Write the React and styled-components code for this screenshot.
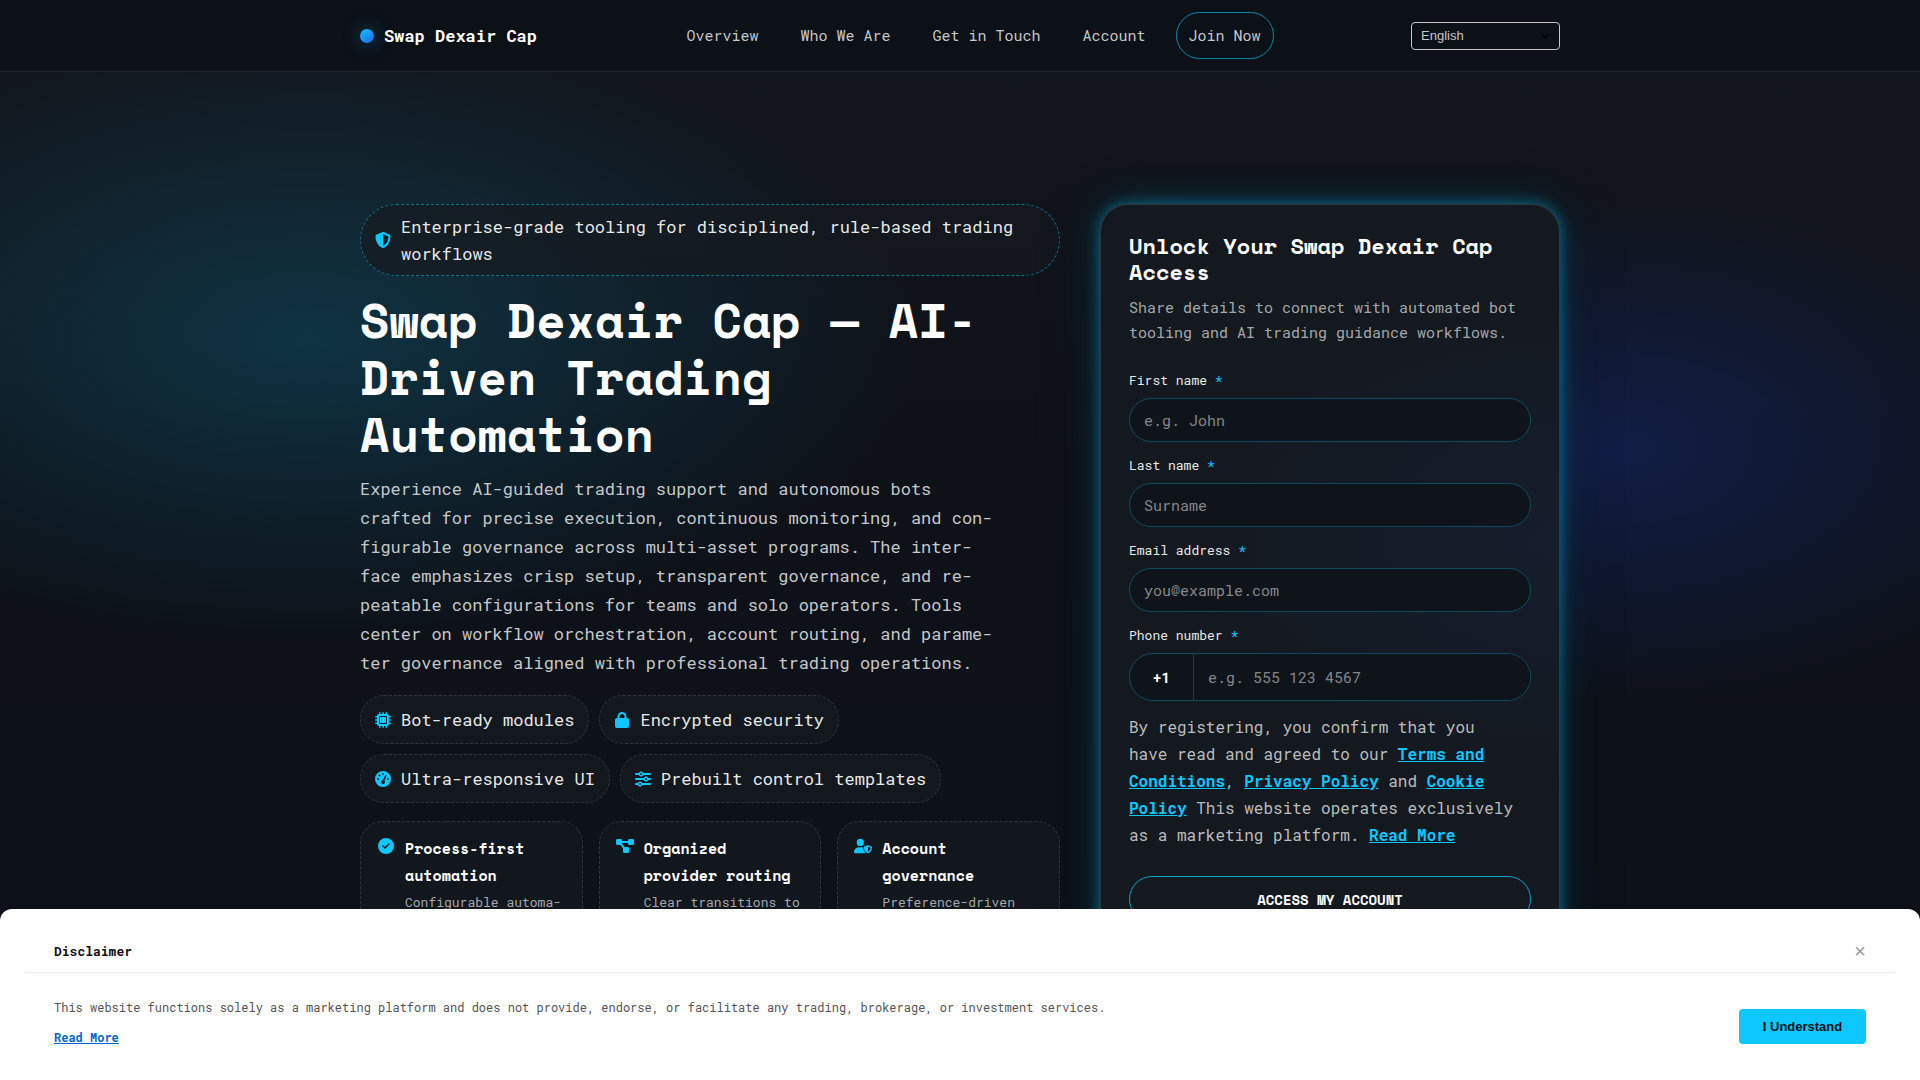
import React from "react";
import styled, { createGlobalStyle } from "styled-components";
import {
  FaShieldHalved,
  FaMicrochip,
  FaLock,
  FaGaugeHigh,
  FaSliders,
  FaCircleCheck,
  FaDiagramProject,
  FaUserShield,
} from "react-icons/fa6";
import { ChevronDown } from "lucide-react";

const navItems = ["Overview", "Who We Are", "Get in Touch", "Account"];

const chips = [
  { icon: FaMicrochip, text: "Bot-ready modules" },
  { icon: FaLock, text: "Encrypted security" },
  { icon: FaGaugeHigh, text: "Ultra-responsive UI" },
  { icon: FaSliders, text: "Prebuilt control templates" },
];

const features = [
  {
    icon: FaCircleCheck,
    title: "Process-first automation",
    text: "Configurable automa-",
  },
  {
    icon: FaDiagramProject,
    title: "Organized provider routing",
    text: "Clear transitions to",
  },
  {
    icon: FaUserShield,
    title: "Account governance",
    text: "Preference-driven",
  },
];

const fields = [
  { id: "first", label: "First name", type: "text", hint: "e.g. John" },
  { id: "last", label: "Last name", type: "text", hint: "Surname" },
  { id: "email", label: "Email address", type: "email", hint: "you@example.com" },
];

function App() {
  return (
    <React.Fragment>
      <GlobalStyle />
      <Header>
        <HeaderInner>
          <Brand href="#">
            <Dot />
            Swap Dexair Cap
          </Brand>
          <Nav>
            {navItems.map((item) => (
              <NavLink key={item} href="#">
                {item}
              </NavLink>
            ))}
            <NavLink href="#" $outlined>
              Join Now
            </NavLink>
          </Nav>
          <LangBox>
            <Lang aria-label="Language">
              <option>English</option>
            </Lang>
            <ChevronDown size={14} color="#000" />
          </LangBox>
        </HeaderInner>
      </Header>

      <Hero>
        <Intro>
          <Badge>
            <FaShieldHalved />
            <span>
              Enterprise-grade tooling for disciplined, rule-based trading
              workflows
            </span>
          </Badge>
          <Title>Swap Dexair Cap — AI-Driven Trading Automation</Title>
          <Lead>
            Experience AI-guided trading support and autonomous bots crafted for
            precise execution, continuous monitoring, and con&shy;figurable
            governance across multi-asset programs. The inter&shy;face
            emphasizes crisp setup, transparent governance, and re&shy;peatable
            configurations for teams and solo operators. Tools center on
            workflow orchestration, account routing, and parame&shy;ter
            governance aligned with professional trading operations.
          </Lead>
          <Chips>
            {chips.map(({ icon: Icon, text }) => (
              <Chip key={text}>
                <Icon />
                {text}
              </Chip>
            ))}
          </Chips>
          <Features>
            {features.map(({ icon: Icon, title, text }) => (
              <Feature key={title}>
                <Icon />
                <div>
                  <FeatureTitle>{title}</FeatureTitle>
                  <FeatureText>{text}</FeatureText>
                </div>
              </Feature>
            ))}
          </Features>
        </Intro>

        <Card>
          <CardTitle>Unlock Your Swap Dexair Cap Access</CardTitle>
          <CardText>
            Share details to connect with automated bot tooling and AI trading
            guidance workflows.
          </CardText>
          <Form onSubmit={(e) => e.preventDefault()}>
            {fields.map((f) => (
              <Field key={f.id}>
                <Label htmlFor={f.id}>
                  {f.label} <Star>*</Star>
                </Label>
                <Input id={f.id} type={f.type} placeholder={f.hint} />
              </Field>
            ))}
            <Field>
              <Label htmlFor="phone">
                Phone number <Star>*</Star>
              </Label>
              <PhoneRow>
                <Prefix>+1</Prefix>
                <PhoneInput id="phone" type="tel" placeholder="e.g. 555 123 4567" />
              </PhoneRow>
            </Field>
            <Legal>
              By registering, you confirm that you
              <br />
              have read and agreed to our <a href="#">Terms and</a>
              <br />
              <a href="#">Conditions</a>, <a href="#">Privacy Policy</a> and{" "}
              <a href="#">Cookie</a>
              <br />
              <a href="#">Policy</a> This website operates exclusively
              <br />
              as a marketing platform. <a href="#">Read More</a>
            </Legal>
            <Submit type="submit">ACCESS MY ACCOUNT</Submit>
          </Form>
        </Card>
      </Hero>

      <Sheet>
        <SheetHead>
          <SheetTitle>Disclaimer</SheetTitle>
          <Close type="button" aria-label="Close">
            ×
          </Close>
        </SheetHead>
        <SheetBody>
          <SheetText>
            <p>
              This website functions solely as a marketing platform and does not
              provide, endorse, or facilitate any trading, brokerage, or
              investment services.
            </p>
            <a href="#">Read More</a>
          </SheetText>
          <Accept type="button">I Understand</Accept>
        </SheetBody>
      </Sheet>
    </React.Fragment>
  );
}

export default App;

const mono = `"Roboto Mono", "Liberation Mono", monospace`;
const display = `"Space Mono", "DejaVu Sans Mono", monospace`;
const cyan = "#0cc8ff";

const GlobalStyle = createGlobalStyle`
  * {
    box-sizing: border-box;
  }
  body {
    margin: 0;
    min-height: 100vh;
    font-family: ${mono};
    font-size: 17px;
    line-height: 27px;
    color: #e8e8e8;
    background:
      radial-gradient(720px 360px at 16% 340px, rgba(12, 200, 255, 0.18), transparent 85%),
      radial-gradient(560px 300px at 84% 450px, rgba(30, 80, 255, 0.2), transparent 85%),
      linear-gradient(180deg, #13171e 0px, #0e1118 450px, #0c1119 1080px);
  }
  h1, h2, h3, p {
    margin: 0;
  }
`;

const Header = styled.header`
  background-color: #0c1017;
  border-bottom: 1px solid #20242b;
`;

const HeaderInner = styled.div`
  max-width: 1200px;
  min-height: 71px;
  margin: 0 auto;
  display: flex;
  justify-content: space-between;
  align-items: center;
`;

const Brand = styled.a`
  display: flex;
  align-items: center;
  gap: 10px;
  color: #fff;
  font-weight: 700;
  text-decoration: none;
`;

const Dot = styled.span`
  width: 14px;
  height: 14px;
  border-radius: 50%;
  background: linear-gradient(135deg, #0cc8ff, #2563eb);
  box-shadow: 0 0 18px rgba(12, 200, 255, 0.4);
`;

const Nav = styled.nav`
  display: flex;
  align-items: center;
  gap: 18px;
`;

const NavLink = styled.a`
  padding: 10px 12px;
  color: #c6c7c9;
  font-size: 15px;
  line-height: 25px;
  text-decoration: none;
  border-radius: 24px;
  border: ${(props) => (props.$outlined ? "1px solid #0b86ab" : "none")};
`;

const LangBox = styled.div`
  display: grid;
  align-items: center;
  justify-items: end;

  > * {
    grid-area: 1 / 1;
  }
  svg {
    margin-right: 8px;
    pointer-events: none;
  }
`;

const Lang = styled.select`
  appearance: none;
  width: 149px;
  height: 28px;
  padding: 0 9px;
  border: 1px solid #c6c7c9;
  border-radius: 4px;
  background: transparent;
  color: #c6c7c9;
  font-family: "Liberation Sans", sans-serif;
  font-size: 13px;
`;

const Hero = styled.main`
  max-width: 1200px;
  margin: 0 auto;
  padding: 132px 0 80px;
  display: grid;
  grid-template-columns: minmax(0, 1fr) 460px;
  align-items: start;
  gap: 40px;
`;

const Intro = styled.section`
  display: flex;
  flex-direction: column;
`;

const Badge = styled.div`
  display: flex;
  align-items: center;
  gap: 10px;
  padding: 8px 14px;
  border: 1px dashed #0b7595;
  border-radius: 36px;
  background-color: rgba(22, 25, 32, 0.7);

  svg {
    flex: none;
    width: 16px;
    height: 16px;
    color: ${cyan};
  }
`;

const Title = styled.h1`
  margin-top: 15px;
  font-family: ${display};
  font-size: 48px;
  line-height: 57px;
  color: #fff;
`;

const Lead = styled.p`
  max-width: 636px;
  margin-top: 12px;
  line-height: 29px;
  color: #c6c7c9;
`;

const Chips = styled.div`
  display: flex;
  flex-wrap: wrap;
  gap: 10px;
  margin-top: 18px;
`;

const Chip = styled.span`
  display: flex;
  align-items: center;
  gap: 10px;
  padding: 10px 14px;
  border: 1px dashed #31363d;
  border-radius: 24px;
  background-color: #13181f;

  svg {
    width: 16px;
    height: 16px;
    color: ${cyan};
  }
`;

const Features = styled.div`
  display: grid;
  grid-template-columns: repeat(3, 1fr);
  gap: 16px;
  margin-top: 18px;
`;

const Feature = styled.article`
  display: flex;
  gap: 10px;
  min-height: 160px;
  padding: 13px 16px;
  border: 1px dashed #31363d;
  border-radius: 22px;
  background-color: #12171e;

  svg {
    flex: none;
    width: 18px;
    height: 16px;
    margin-top: 3px;
    color: ${cyan};
  }
`;

const FeatureTitle = styled.h3`
  font-family: ${display};
  font-size: 15px;
  line-height: 27px;
  color: #fff;
`;

const FeatureText = styled.p`
  font-size: 13px;
  color: #a5a7aa;
`;

const Card = styled.section`
  padding: 28px;
  border: 1px solid #33363c;
  border-radius: 28px;
  background:
    radial-gradient(400px 260px at 100% 45%, rgba(40, 60, 160, 0.1), transparent),
    #14191f;
  box-shadow:
    0 0 14px rgba(12, 200, 255, 0.45),
    0 0 40px rgba(12, 200, 255, 0.2),
    0 10px 60px rgba(0, 0, 0, 0.4);
`;

const CardTitle = styled.h2`
  font-family: ${display};
  font-size: 22px;
  line-height: 26px;
  color: #fff;
`;

const CardText = styled.p`
  margin-top: 10px;
  font-size: 15px;
  line-height: 25px;
  color: #a5a7aa;
`;

const Form = styled.form`
  display: flex;
  flex-direction: column;
  gap: 12px;
  margin-top: 24px;
`;

const Field = styled.div`
  display: flex;
  flex-direction: column;
  gap: 7px;
`;

const Label = styled.label`
  font-size: 13px;
  line-height: 22px;
`;

const Star = styled.span`
  color: ${cyan};
`;

const Input = styled.input`
  width: 100%;
  height: 44px;
  padding: 0 14px;
  border: 1px solid #0d4d62;
  border-radius: 22px;
  background-color: #0f131a;
  color: #e8e8e8;
  font-family: ${mono};
  font-size: 15px;
  outline: none;

  &::placeholder {
    color: #85878b;
  }
`;

const PhoneRow = styled.div`
  display: flex;
  height: 48px;
  overflow: hidden;
  border: 1px solid #0d4d62;
  border-radius: 24px;
  background-color: #0f131a;
`;

const Prefix = styled.span`
  display: flex;
  justify-content: center;
  align-items: center;
  width: 64px;
  border-right: 1px solid #31363d;
  color: #fff;
  font-size: 14px;
  font-weight: 700;
`;

const PhoneInput = styled(Input)`
  flex: 1;
  height: auto;
  border: none;
  border-radius: 0;
`;

const Legal = styled.p`
  font-size: 16px;
  color: #bbbcbe;

  a {
    color: ${cyan};
    font-weight: 700;
  }
`;

const Submit = styled.button`
  height: 46px;
  margin-top: 16px;
  border: 1px solid #0ba3d0;
  border-radius: 23px;
  background: transparent;
  color: #fff;
  font-family: ${display};
  font-size: 14px;
  font-weight: 700;
`;

const Sheet = styled.aside`
  position: fixed;
  left: 0;
  right: 0;
  bottom: 0;
  padding: 25px;
  border-radius: 12px 12px 0 0;
  background-color: #fff;
`;

const SheetHead = styled.div`
  display: flex;
  justify-content: space-between;
  align-items: center;
  height: 39px;
  padding: 0 29px 4px;
  border-bottom: 1px solid #e9e9e9;
`;

const SheetTitle = styled.h2`
  font-size: 13px;
  line-height: 22px;
  color: #111;
`;

const Close = styled.button`
  padding: 0;
  border: none;
  background: none;
  color: #999;
  font-family: "Liberation Sans", sans-serif;
  font-size: 20px;
  line-height: 20px;
`;

const SheetBody = styled.div`
  display: flex;
  justify-content: space-between;
  align-items: flex-end;
  padding: 24px 29px 8px;
`;

const SheetText = styled.div`
  display: flex;
  flex-direction: column;
  align-items: flex-start;
  gap: 10px;
  font-size: 12px;
  line-height: 20px;
  color: #555;

  a {
    color: #0066cc;
    font-weight: 700;
  }
`;

const Accept = styled.button`
  flex: none;
  width: 127px;
  height: 35px;
  margin-bottom: 3px;
  border: none;
  border-radius: 4px;
  background-color: ${cyan};
  color: #0b0f16;
  font-family: "Liberation Sans", sans-serif;
  font-size: 13px;
  font-weight: 700;
`;
